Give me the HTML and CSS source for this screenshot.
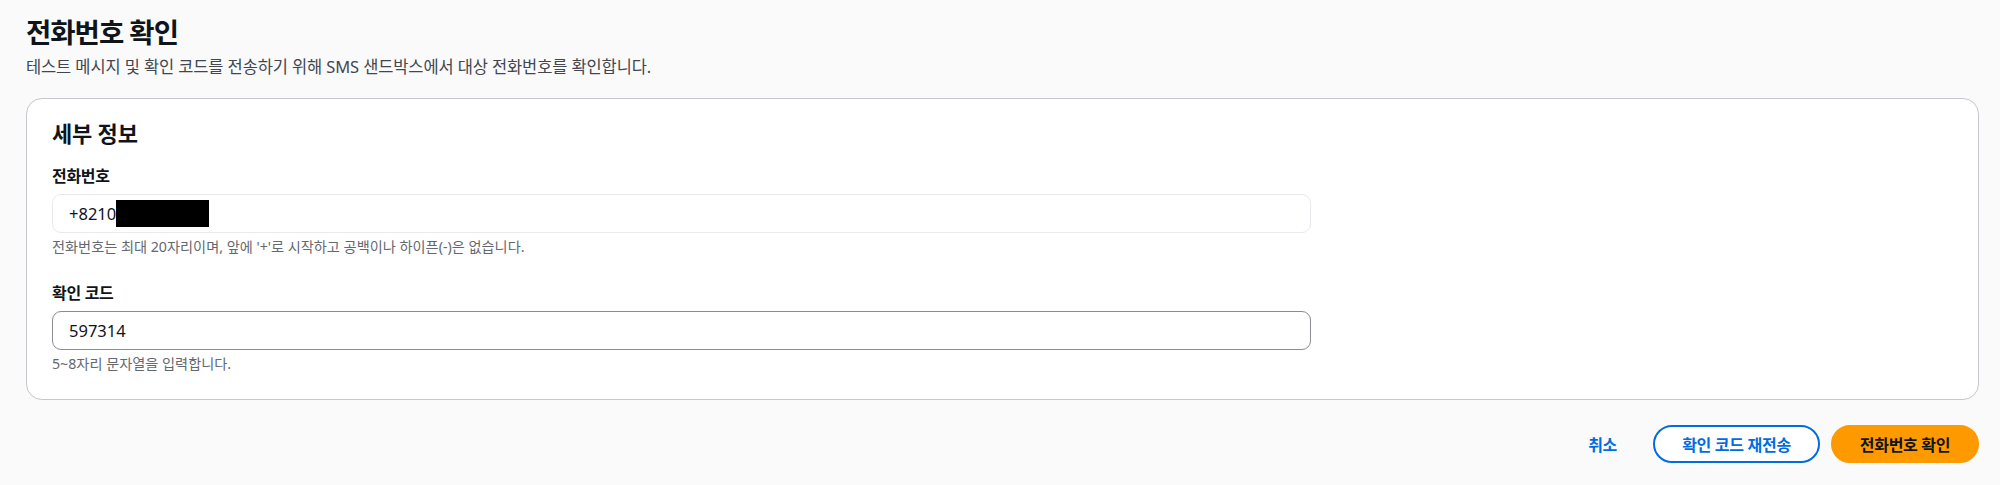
FILE: index.html
```html
<!DOCTYPE html>
<html lang="ko">
<head>
<meta charset="utf-8">
<link rel="stylesheet" href="styles.css">
</head>
<body>
<main class="page">
  <header class="page-header">
    <h1 class="title">전화번호 확인</h1>
    <p class="subtitle">테스트 메시지 및 확인 코드를 전송하기 위해 SMS 샌드박스에서 대상 전화번호를 확인합니다.</p>
  </header>
  <section class="card">
    <h2 class="card-title">세부 정보</h2>
    <div class="field">
      <div class="label">전화번호</div>
      <div class="input input-readonly">+8210<span class="redact"></span></div>
      <div class="hint">전화번호는 최대 20자리이며, 앞에 '+'로 시작하고 공백이나 하이픈(-)은 없습니다.</div>
    </div>
    <div class="field field-2">
      <div class="label">확인 코드</div>
      <div class="input">597314</div>
      <div class="hint">5~8자리 문자열을 입력합니다.</div>
    </div>
  </section>
  <footer class="actions">
    <button class="btn btn-link">취소</button>
    <button class="btn btn-normal">확인 코드 재전송</button>
    <button class="btn btn-primary">전화번호 확인</button>
  </footer>
</main>
</body>
</html>
```
FILE: styles.css
```css
html, body {
  margin: 0;
  padding: 0;
  background: #fafafa;
}
body {
  font-family: "Noto Sans", "Noto Sans CJK KR", sans-serif;
  color: #0f141a;
}
.page {
  padding: 0 21px 0 26px;
}
.page-header {
  padding-top: 15px;
}
.title {
  margin: 0;
  font-size: 27.5px;
  line-height: 36px;
  font-weight: 700;
  letter-spacing: -1px;
}
.subtitle {
  margin: 5px 0 0;
  font-size: 16.5px;
  line-height: 22px;
  color: #414750;
  letter-spacing: -0.12px;
}
.card {
  margin-top: 20px;
  background: #ffffff;
  border: 1px solid #c6c6cd;
  border-radius: 16px;
  padding: 20px 25px 25px;
  height: 302px;
  box-sizing: border-box;
}
.card-title {
  margin: 0;
  font-size: 22px;
  line-height: 28px;
  font-weight: 700;
  letter-spacing: -0.2px;
}
.field {
  margin-top: 19px;
}
.field-2 {
  margin-top: 27px;
}
.label {
  font-size: 16px;
  line-height: 20px;
  font-weight: 700;
  letter-spacing: -0.3px;
}
.input {
  margin-top: 8px;
  width: 1259px;
  height: 39px;
  box-sizing: border-box;
  border: 1px solid #8c8c94;
  border-radius: 9px;
  background: #ffffff;
  padding: 0 16px;
  display: flex;
  align-items: center;
  font-size: 16.5px;
}
.input-readonly {
  border-color: #e9e9ed;
}
.redact {
  display: inline-block;
  width: 93px;
  height: 27px;
  background: #000000;
}
.hint {
  margin-top: 5px;
  font-size: 14.2px;
  line-height: 18px;
  color: #656871;
  letter-spacing: 0;
}
.actions {
  display: flex;
  justify-content: flex-end;
  align-items: center;
  margin-top: 25px;
}
.btn {
  font-family: "Noto Sans", "Noto Sans CJK KR", sans-serif;
  font-size: 16px;
  font-weight: 700;
  height: 38px;
  box-sizing: border-box;
  border-radius: 20px;
  cursor: pointer;
  letter-spacing: -0.3px;
}
.btn-link {
  background: none;
  border: none;
  color: #006ce0;
  padding: 0 18px;
  margin-right: 18px;
}
.btn-normal {
  background: #ffffff;
  border: 2px solid #006ce0;
  color: #006ce0;
  width: 167px;
  margin-right: 11px;
}
.btn-primary {
  background: #ff9900;
  border: 2px solid #ff9900;
  color: #0f141a;
  width: 148px;
}
```
